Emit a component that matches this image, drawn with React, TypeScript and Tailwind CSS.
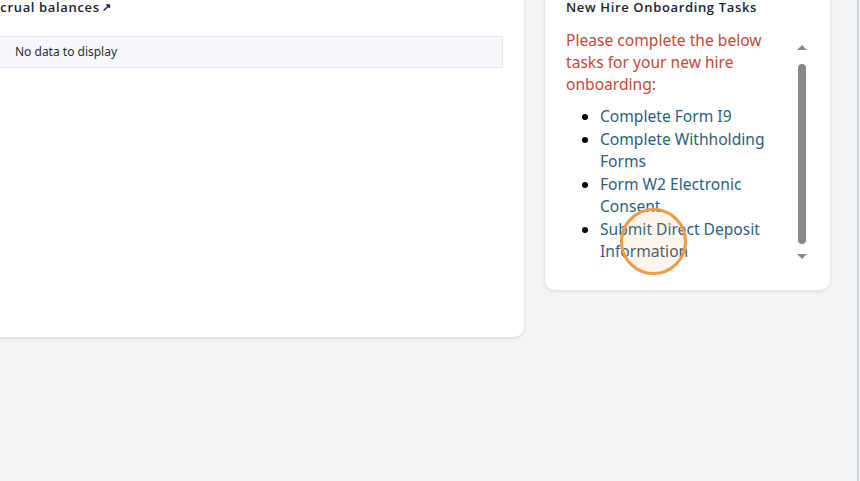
import React from "react";

const tasks = [
  "Complete Form I9",
  "Complete Withholding Forms",
  "Form W2 Electronic Consent",
  "Submit Direct Deposit Information",
];

function AccrualCard() {
  return (
    <section className="ml-[-31px] mt-[-12px] h-[349px] w-[555px] shrink-0 rounded-b-[10px] bg-white pl-[15px] pr-[21px] pt-[10px] shadow-[0_1px_4px_rgba(0,0,0,0.12)]">
      <h2 className="flex items-center gap-[2px] text-[13px] font-semibold leading-[18px] tracking-[0.65px] text-[#1d2433] [font-family:'Open_Sans',sans-serif]">
        Accrual balances
        <span className="text-[11px] font-bold">↗</span>
      </h2>
      <div className="ml-[-3px] mt-[20px] flex h-[32px] items-center border border-[#e1e5ef] bg-[#f6f7fc] pl-[33px] text-[12px] text-[#2a2e36] [font-family:'Noto_Sans',sans-serif]">
        No data to display
      </div>
    </section>
  );
}

function OnboardingCard() {
  return (
    <section className="relative ml-[21px] mt-[-12px] h-[302px] w-[285px] shrink-0 rounded-b-[10px] bg-white pl-[21px] pt-[11px] shadow-[0_1px_4px_rgba(0,0,0,0.12)]">
      <h2 className="text-[13px] font-semibold leading-[16px] tracking-[0.65px] text-[#1d2433] [font-family:'Open_Sans',sans-serif]">
        New Hire Onboarding Tasks
      </h2>
      <div className="mt-[14px] flex">
        <div className="w-[212px] [font-family:'Noto_Sans',sans-serif]">
          <p className="text-[15.6px] leading-[22px] text-[#c5473b]">
            Please complete the below tasks for your new hire onboarding:
          </p>
          <ul className="mt-[10px] list-disc pl-[34px] text-[15.6px] leading-[22.5px] text-[#2d5f7a] marker:text-black">
            {tasks.map((t) => (
              <li key={t}>{t}</li>
            ))}
          </ul>
        </div>
        <div className="ml-[20px] mt-[16px] flex w-[8px] flex-col items-center">
          <div className="h-0 w-0 border-x-[5px] border-b-[5px] border-x-transparent border-b-[#8a8a8a]" />
          <div className="mt-[14px] h-[180px] w-[8px] rounded-[4px] bg-[#888888]" />
          <div className="mt-[10px] h-0 w-0 border-x-[5px] border-t-[5px] border-x-transparent border-t-[#8a8a8a]" />
        </div>
      </div>
    </section>
  );
}

export default function App() {
  return (
    <div className="relative flex h-[481px] w-[860px] overflow-hidden bg-[#f4f4f4]">
      <AccrualCard />
      <OnboardingCard />
      <div className="ml-auto flex h-full">
        <div className="w-[2px] bg-[#cbd5de]" />
        <div className="w-[1px] bg-[#f7f8fa]" />
      </div>
      <div className="pointer-events-none absolute left-[620px] top-[208px] h-[67px] w-[67px] rounded-full border-[3px] border-[#ef9a45] bg-[#ef9a45]/10" />
    </div>
  );
}
